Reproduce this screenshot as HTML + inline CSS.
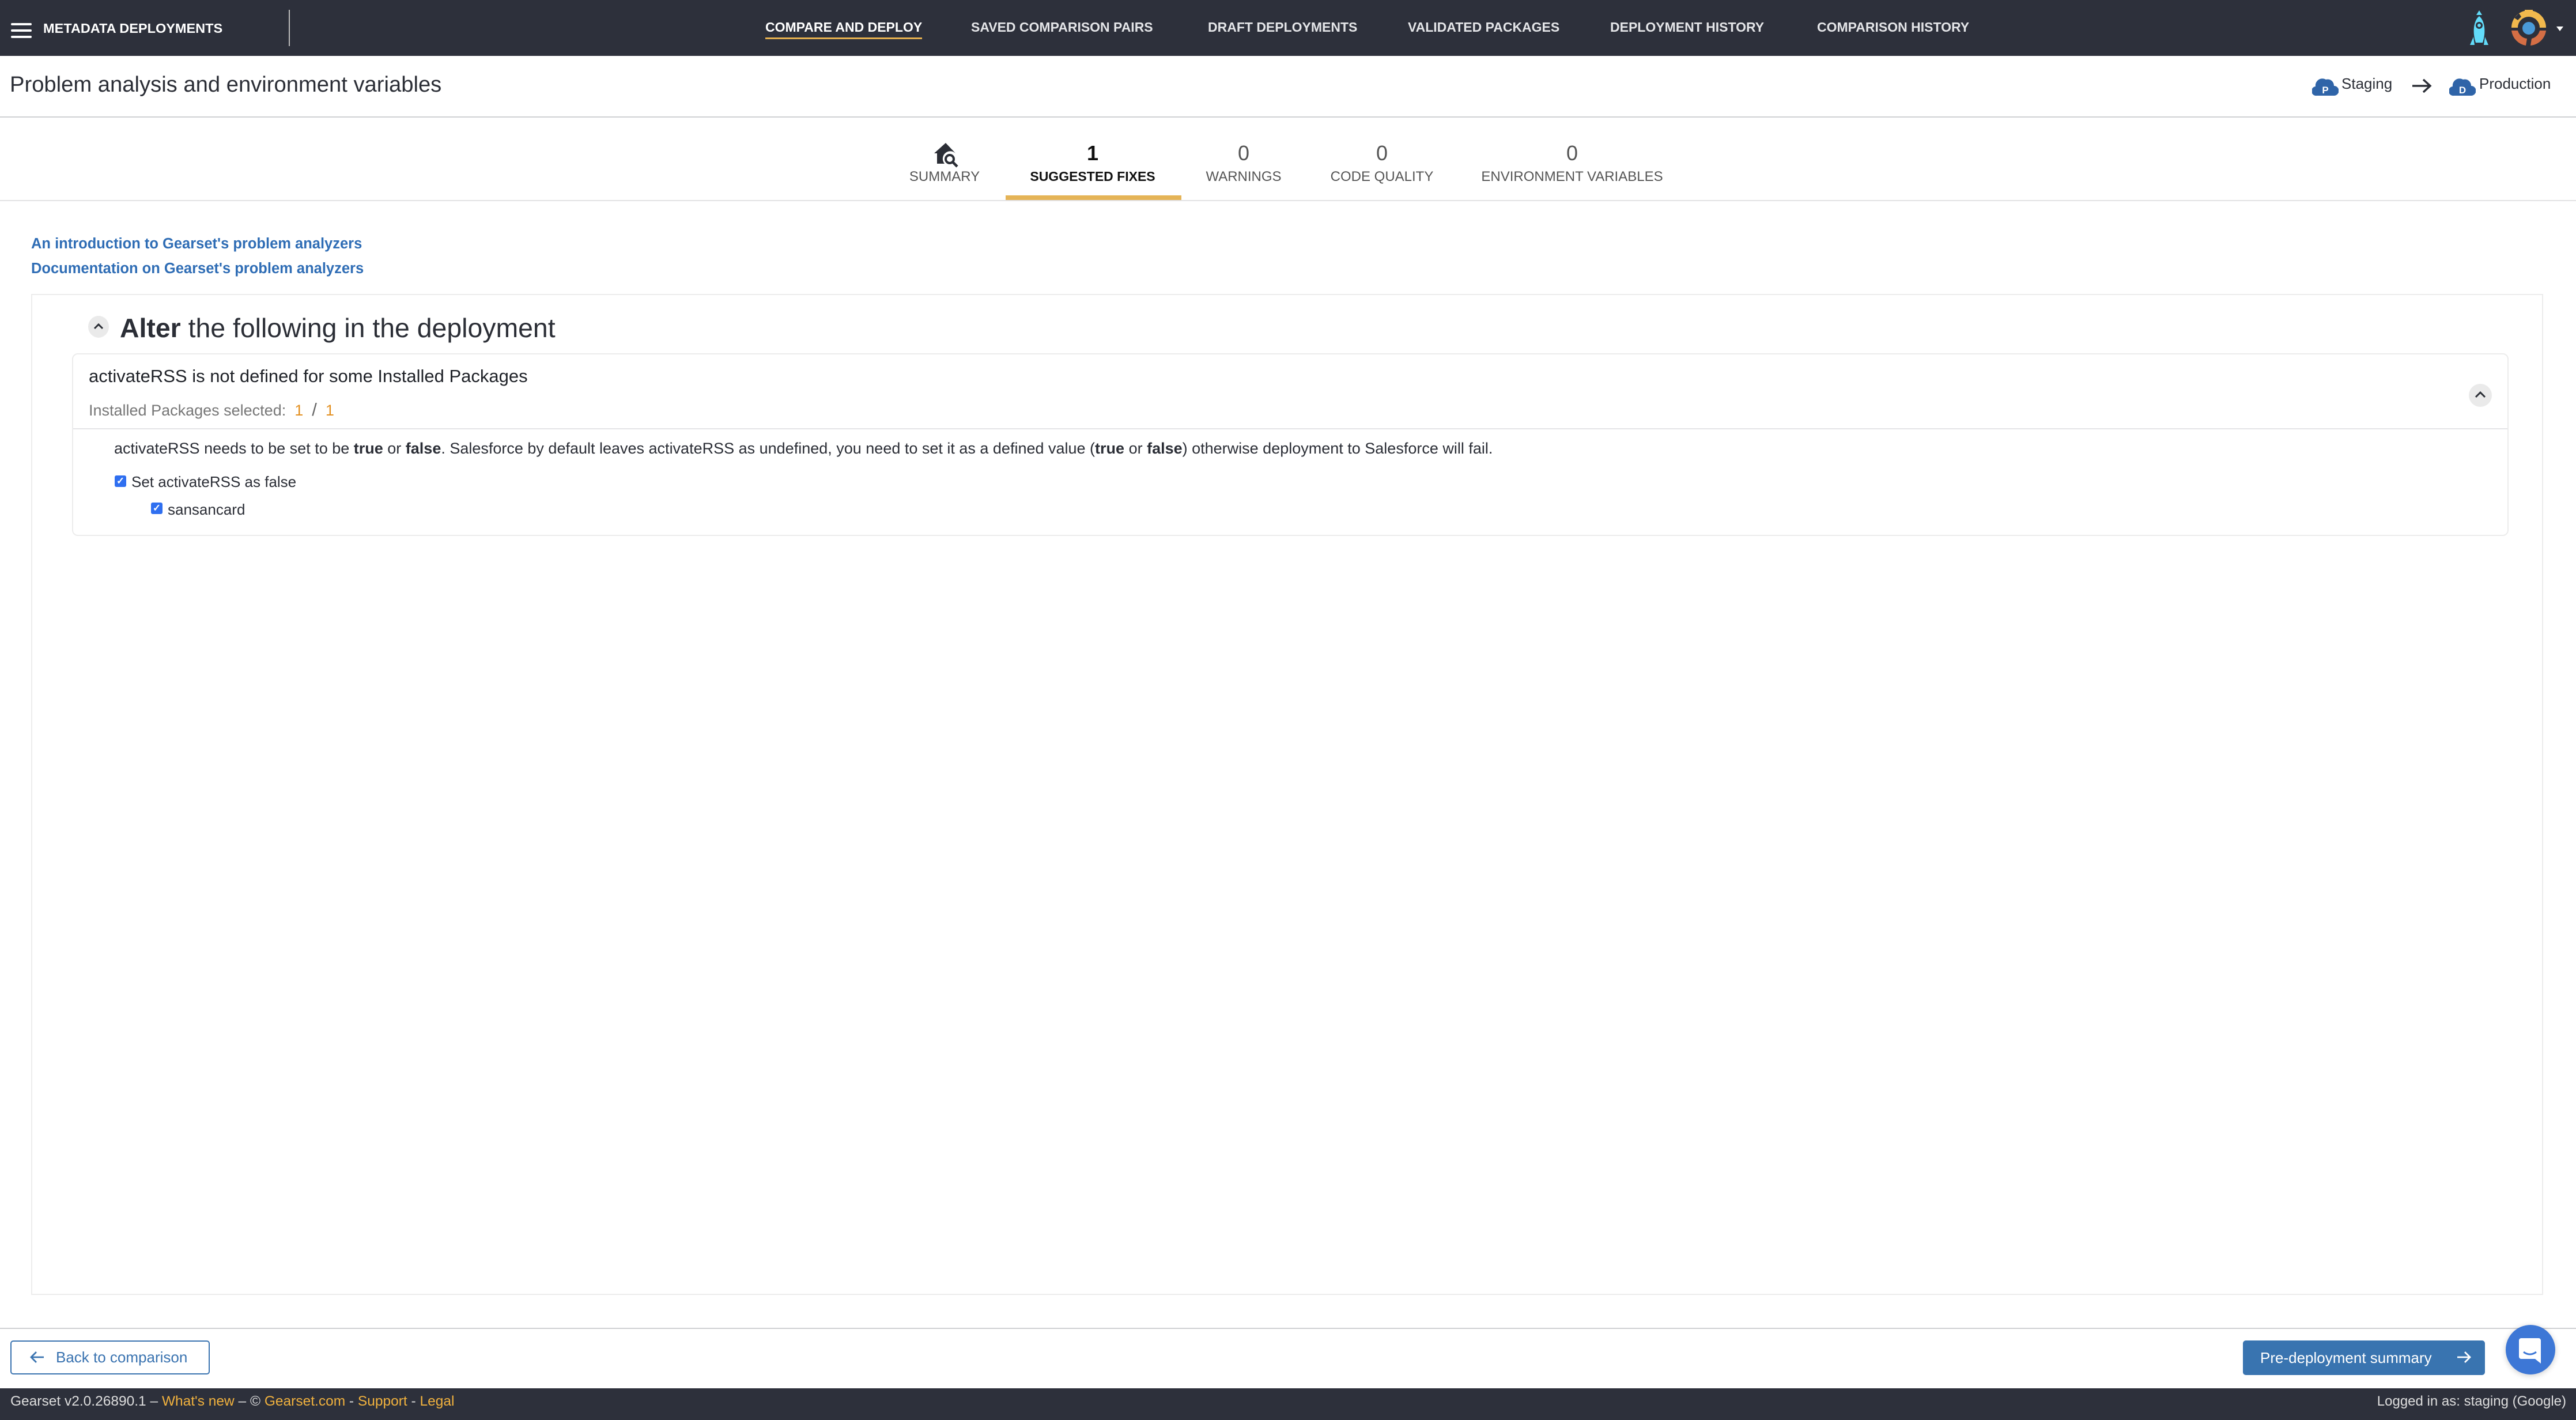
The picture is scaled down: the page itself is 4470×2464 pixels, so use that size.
<!DOCTYPE html>
<html><head><meta charset="utf-8"><style>
*{box-sizing:border-box;margin:0;padding:0}
body{width:4470px;height:2464px;position:relative;background:#fff;font-family:"Liberation Sans",sans-serif;color:#2b2e36;overflow:hidden}
.a{position:absolute;white-space:nowrap}
.nav{position:absolute;left:0;top:0;width:4470px;height:97px;background:#2d303b}
.ni{position:absolute;top:34px;font-size:23px;font-weight:bold;color:#e4e5e8}
.tabn{position:absolute;top:245px;font-size:36px;color:#555;text-align:center;width:400px}
.tabl{position:absolute;top:293px;font-size:24px;color:#555;text-align:center;width:400px}
.lnk{color:#2f6db5;font-size:25.5px;font-weight:bold}
.cb{position:absolute;width:20px;height:20px;background:#2f6ff0;border-radius:3px;color:#fff;font-size:17px;line-height:20px;text-align:center;font-weight:bold}
</style></head><body>
<div class="nav"></div>
<div class="a" style="left:19px;top:40px;width:36px;height:4px;background:#fff;border-radius:2px"></div>
<div class="a" style="left:19px;top:51px;width:36px;height:4px;background:#fff;border-radius:2px"></div>
<div class="a" style="left:19px;top:62px;width:36px;height:4px;background:#fff;border-radius:2px"></div>
<div class="a" style="left:75px;top:36px;font-size:23.5px;font-weight:bold;color:#fff">METADATA DEPLOYMENTS</div>
<div class="a" style="left:501px;top:17px;width:2px;height:63px;background:#bbb"></div>
<div class="ni" style="left:1328px;color:#fff">COMPARE AND DEPLOY</div>
<div class="a" style="left:1328px;top:65px;width:272px;height:3px;background:#e5b04f"></div>
<div class="ni" style="left:1685px">SAVED COMPARISON PAIRS</div>
<div class="ni" style="left:2096px">DRAFT DEPLOYMENTS</div>
<div class="ni" style="left:2443px">VALIDATED PACKAGES</div>
<div class="ni" style="left:2794px">DEPLOYMENT HISTORY</div>
<div class="ni" style="left:3153px">COMPARISON HISTORY</div>
<svg class="a" style="left:4282px;top:16px" width="40" height="64" viewBox="0 0 40 64"><path d="M20 2 L15 10 H25 Z" fill="#62dcfa"/><path d="M20 12 C30 20 32 40 26 58 H14 C8 40 10 20 20 12Z" fill="#62dcfa"/><circle cx="20" cy="28" r="6" fill="#2d303b"/><circle cx="20" cy="28" r="3" fill="#62dcfa"/><path d="M4 62 L10 48 L12 62Z M36 62 L30 48 L28 62Z" fill="#62dcfa"/></svg>
<svg class="a" style="left:4355px;top:15px" width="66" height="66" viewBox="0 0 66 66"><path d="M3 33 A30 30 0 0 1 63 33 H52 A19 19 0 0 0 14 33Z M26 2 H40 V10 H26Z M50 8 L58 16 L52 20 L46 14Z M16 8 L8 16 L14 20 L20 14Z" fill="#f2b94d"/><path d="M3 38 A30 30 0 0 0 28 64 L30 52 A19 19 0 0 1 14 38Z M63 38 A30 30 0 0 1 36 64 L38 52 A19 19 0 0 0 52 38Z" fill="#d46e45"/><circle cx="33" cy="34" r="11" fill="#4a9ad8"/></svg>
<svg class="a" style="left:4436px;top:46px" width="12" height="8"><path d="M0 0H12L6 8Z" fill="#fff"/></svg>

<div class="a" style="left:17px;top:125px;font-size:38.2px;color:#2b2e36">Problem analysis and environment variables</div>
<svg class="a" style="left:4012px;top:133px" width="46" height="34" viewBox="0 0 46 34"><path d="M8 33 A8 8 0 0 1 6 17 A12 12 0 0 1 24 5 A11 11 0 0 1 38 16 A8.5 8.5 0 0 1 38 33Z" fill="#2f64a8"/><text x="23" y="29" font-size="17" font-weight="bold" fill="#fff" text-anchor="middle" font-family="Liberation Sans">P</text></svg>
<div class="a" style="left:4063px;top:130px;font-size:26px">Staging</div>
<svg class="a" style="left:4184px;top:136px" width="36" height="26" viewBox="0 0 36 26"><path d="M2 13H32M21 2L33 13L21 24" stroke="#2b2e36" stroke-width="3.5" fill="none"/></svg>
<svg class="a" style="left:4250px;top:133px" width="46" height="34" viewBox="0 0 46 34"><path d="M8 33 A8 8 0 0 1 6 17 A12 12 0 0 1 24 5 A11 11 0 0 1 38 16 A8.5 8.5 0 0 1 38 33Z" fill="#2f64a8"/><text x="23" y="29" font-size="17" font-weight="bold" fill="#fff" text-anchor="middle" font-family="Liberation Sans">D</text></svg>
<div class="a" style="left:4302px;top:130px;font-size:26px">Production</div>
<div class="a" style="left:0;top:202px;width:4470px;height:2px;background:#cfd0d3"></div>

<svg class="a" style="left:1619px;top:246px" width="46" height="46" viewBox="0 0 46 46"><path d="M22 2 L2 20 H7 V38 H20 A12 12 0 0 1 40 21 L22 2Z" fill="#2b2e36"/><circle cx="29" cy="30" r="7" fill="none" stroke="#2b2e36" stroke-width="4"/><path d="M34 35 L42 43" stroke="#2b2e36" stroke-width="4.5"/></svg>
<div class="tabl" style="left:1439px">SUMMARY</div>
<div class="tabn" style="left:1696px;color:#111;font-weight:bold">1</div>
<div class="tabl" style="left:1696px;color:#111;font-weight:bold;font-size:23px">SUGGESTED FIXES</div>
<div class="a" style="left:1745px;top:339px;width:305px;height:8px;background:#e5b457"></div>
<div class="tabn" style="left:1958px">0</div>
<div class="tabl" style="left:1958px">WARNINGS</div>
<div class="tabn" style="left:2198px">0</div>
<div class="tabl" style="left:2198px">CODE QUALITY</div>
<div class="tabn" style="left:2528px">0</div>
<div class="tabl" style="left:2528px">ENVIRONMENT VARIABLES</div>
<div class="a" style="left:0;top:347px;width:4470px;height:2px;background:#e2e2e4"></div>

<div class="a lnk" style="left:54px;top:409px">An introduction to Gearset's problem analyzers</div>
<div class="a lnk" style="left:54px;top:452px">Documentation on Gearset's problem analyzers</div>

<div class="a" style="left:54px;top:510px;width:4359px;height:1737px;border:2px solid #ececec"></div>
<div class="a" style="left:153px;top:548px;width:36px;height:38px;border-radius:50%;background:#eaeaea"></div>
<svg class="a" style="left:161px;top:558px" width="20" height="16"><path d="M3 12L10 5L17 12" stroke="#2b2e36" stroke-width="3" fill="none"/></svg>
<div class="a" style="left:208px;top:542px;font-size:46.4px;color:#2b2e36"><b>Alter</b> the following in the deployment</div>

<div class="a" style="left:125px;top:613px;width:4228px;height:317px;border:2px solid #ececec;border-radius:10px"></div>
<div class="a" style="left:154px;top:635px;font-size:31px;color:#1f2228">activateRSS is not defined for some Installed Packages</div>
<div class="a" style="left:154px;top:693px;font-size:27px;color:#777">Installed Packages selected:&nbsp; <span style="color:#e39021">1</span> &nbsp;<span style="color:#666;font-size:31px">/</span>&nbsp; <span style="color:#e39021">1</span></div>
<div class="a" style="left:4284px;top:666px;width:40px;height:40px;border-radius:50%;background:#eaeaea"></div>
<svg class="a" style="left:4293px;top:676px" width="22" height="18"><path d="M3 13L11 5L19 13" stroke="#2b2e36" stroke-width="3" fill="none"/></svg>
<div class="a" style="left:127px;top:743px;width:4224px;height:2px;background:#e4e4e6"></div>
<div class="a" style="left:198px;top:763px;font-size:27px;color:#2b2e36">activateRSS needs to be set to be <b>true</b> or <b>false</b>. Salesforce by default leaves activateRSS as undefined, you need to set it as a defined value (<b>true</b> or <b>false</b>) otherwise deployment to Salesforce will fail.</div>
<div class="cb" style="left:199px;top:825px">✓</div>
<div class="a" style="left:228px;top:821px;font-size:26px">Set activateRSS as false</div>
<div class="cb" style="left:262px;top:872px">✓</div>
<div class="a" style="left:291px;top:869px;font-size:26px">sansancard</div>

<div class="a" style="left:0;top:2304px;width:4470px;height:2px;background:#cfd0d3"></div>
<div class="a" style="left:18px;top:2326px;width:346px;height:59px;border:2px solid #3a73b0;border-radius:5px"></div>
<svg class="a" style="left:50px;top:2343px" width="28" height="24"><path d="M26 12H4M13 3L4 12L13 21" stroke="#3a73b0" stroke-width="2.8" fill="none"/></svg>
<div class="a" style="left:97px;top:2340px;font-size:26px;color:#3a73b0">Back to comparison</div>
<div class="a" style="left:3892px;top:2326px;width:420px;height:60px;background:#3974b0;border-radius:5px"></div>
<div class="a" style="left:3922px;top:2341px;font-size:26px;color:#fff">Pre-deployment summary</div>
<svg class="a" style="left:4262px;top:2343px" width="28" height="24"><path d="M2 12H24M15 3L24 12L15 21" stroke="#fff" stroke-width="2.8" fill="none"/></svg>
<div class="a" style="left:4348px;top:2299px;width:86px;height:86px;border-radius:50%;background:#3d77d6;box-shadow:0 2px 10px rgba(0,0,0,.2)"></div>
<svg class="a" style="left:4371px;top:2322px" width="40" height="44" viewBox="0 0 40 44"><path d="M4 0H34A4 4 0 0 1 38 4V44L28 36H4A4 4 0 0 1 0 32V4A4 4 0 0 1 4 0Z" fill="#fff"/><path d="M8 24Q19 32 30 24" stroke="#3d77d6" stroke-width="3" fill="none"/></svg>

<div class="a" style="left:0;top:2409px;width:4470px;height:55px;background:#2d303b"></div>
<div class="a" style="left:18px;top:2418px;font-size:24.5px;color:#ddd">Gearset v2.0.26890.1 – <span style="color:#f0b13e">What's new</span> – © <span style="color:#f0b13e">Gearset.com</span> - <span style="color:#f0b13e">Support</span> - <span style="color:#f0b13e">Legal</span></div>
<div class="a" style="right:17px;top:2418px;font-size:24px;color:#ddd">Logged in as: staging (Google)</div>
</body></html>
